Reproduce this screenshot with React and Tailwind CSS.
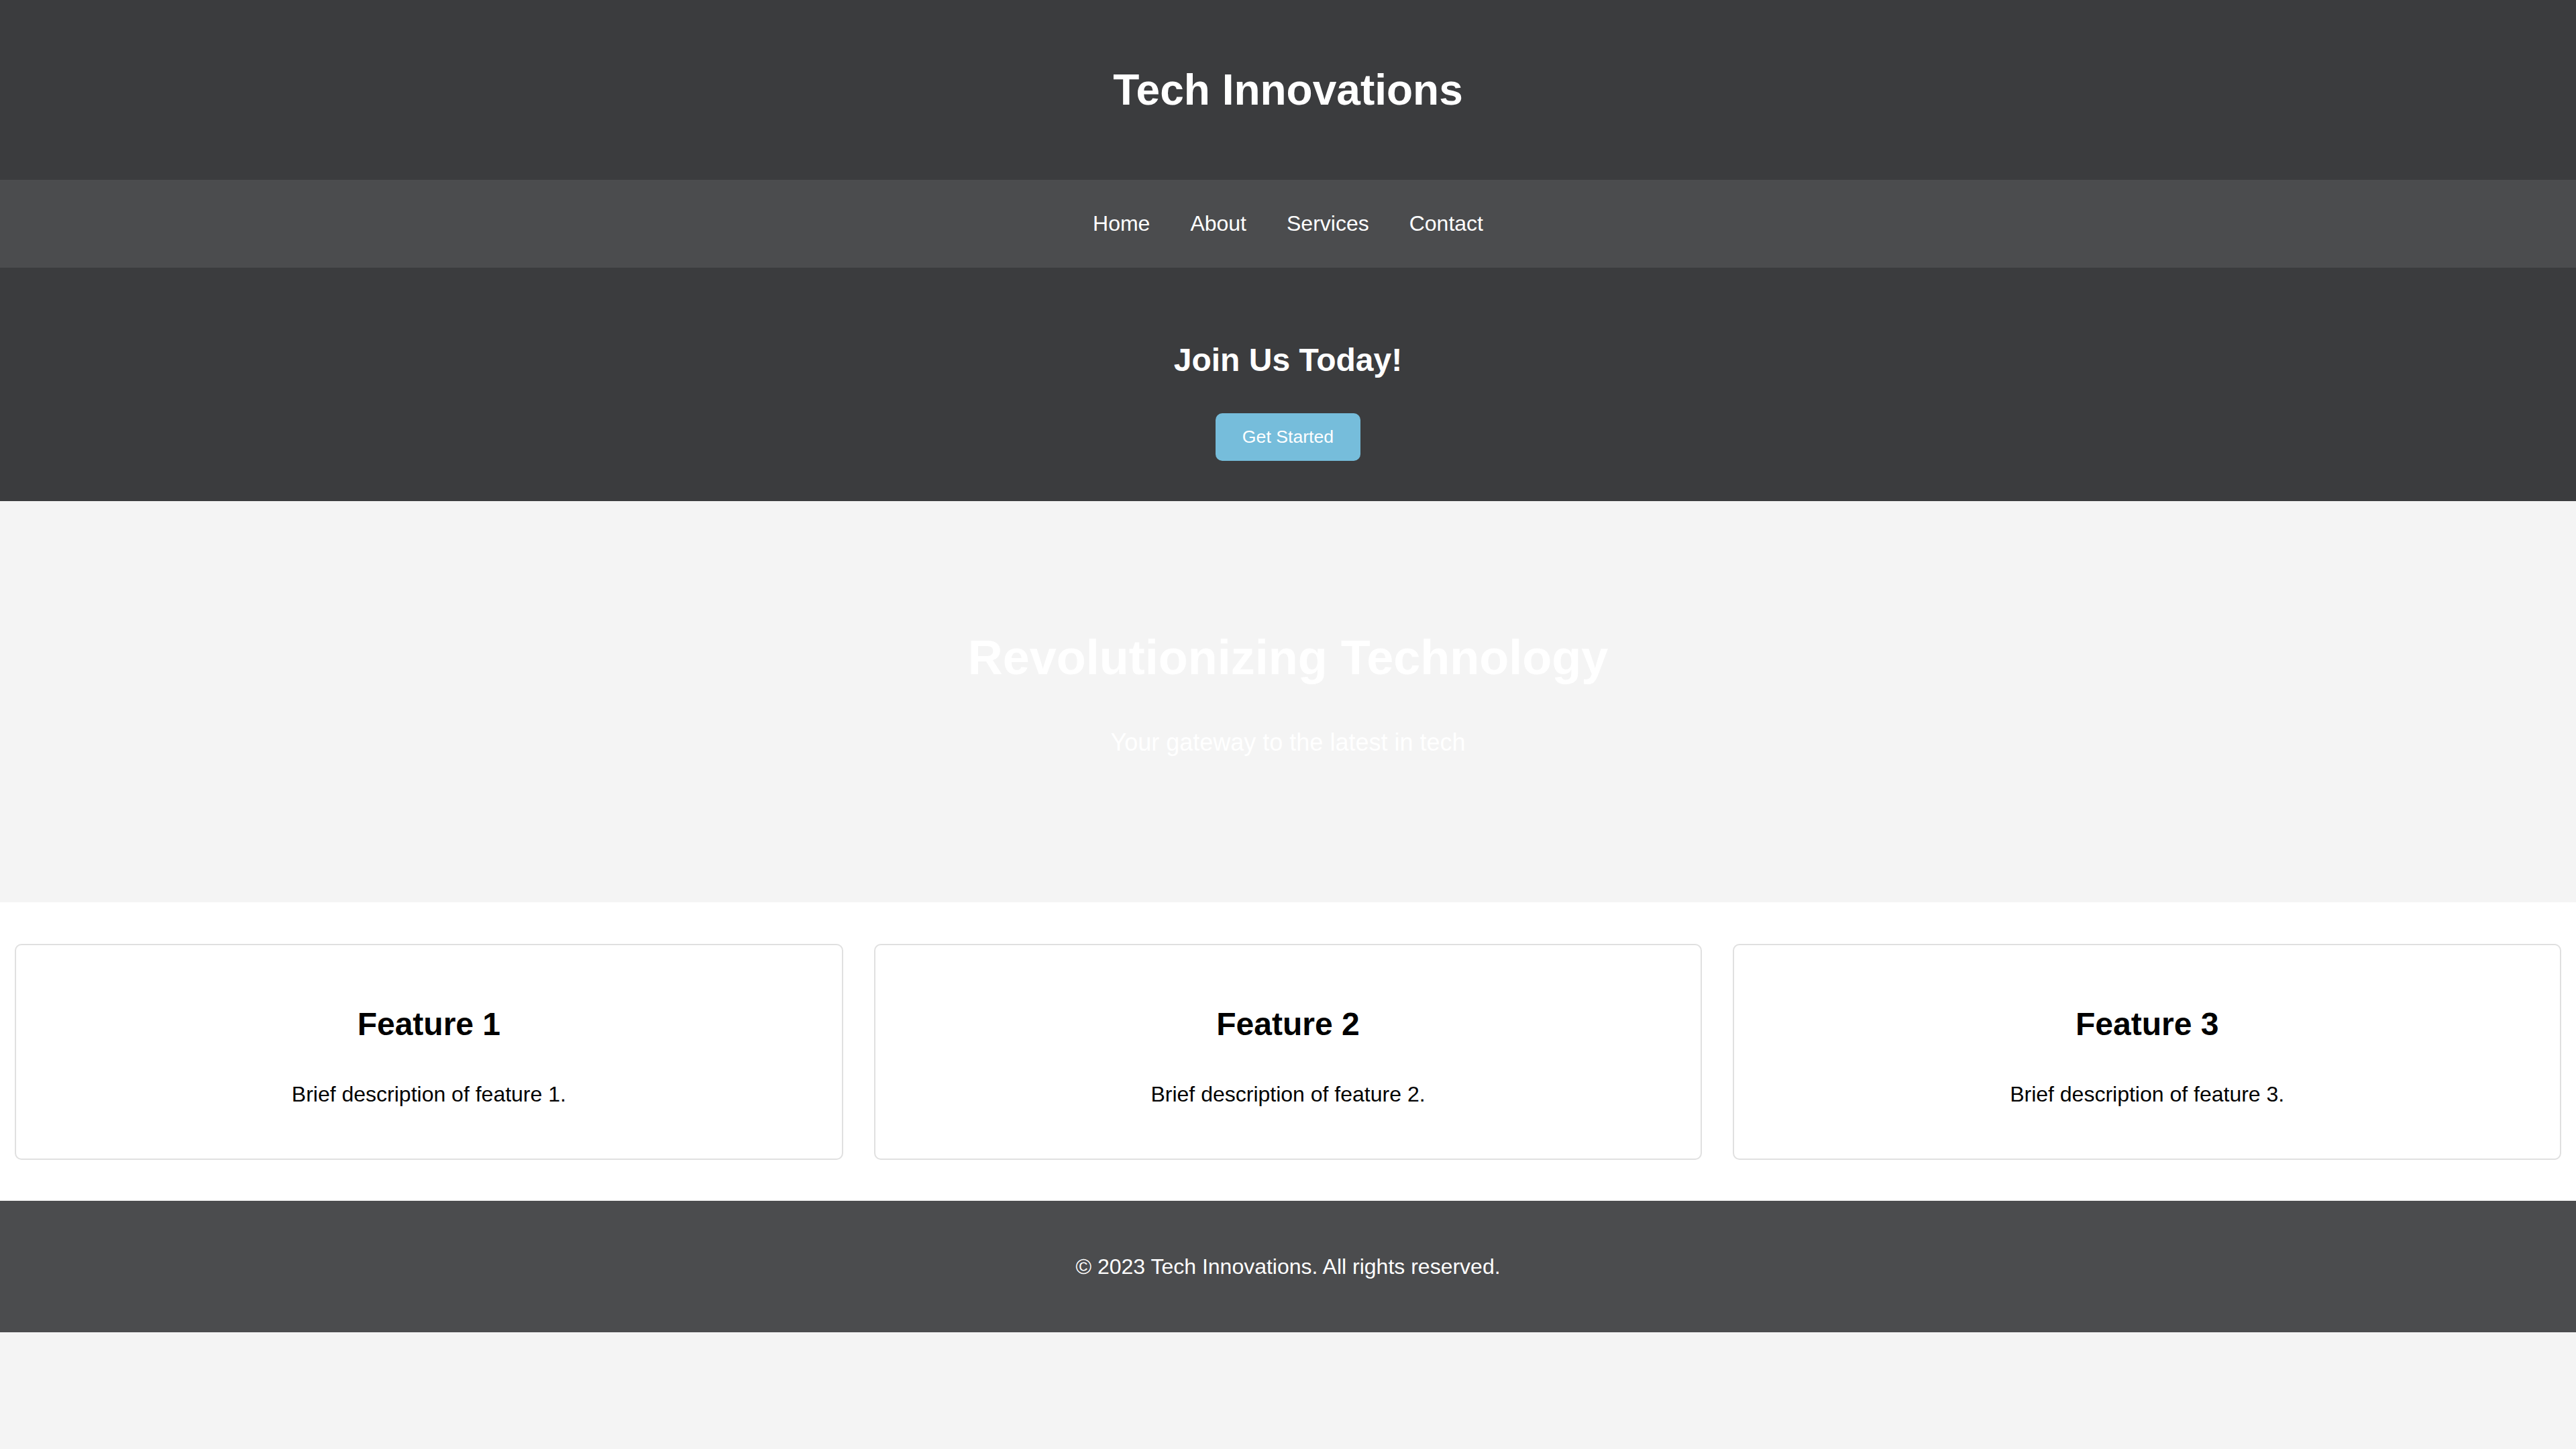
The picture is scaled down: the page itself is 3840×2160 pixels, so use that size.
import React from 'react'

const features = [
  { title: 'Feature 1', text: 'Brief description of feature 1.' },
  { title: 'Feature 2', text: 'Brief description of feature 2.' },
  { title: 'Feature 3', text: 'Brief description of feature 3.' },
]

const links = ['Home', 'About', 'Services', 'Contact']

function FeatureCard({ title, text }) {
  return (
    <div className="flex-1 h-[322px] bg-white border-2 border-[#e0e0e0] rounded-[10px] flex flex-col items-center pt-[90px]">
      <h3 className="text-[48px] leading-[55px] font-bold text-black">{title}</h3>
      <p className="mt-[59px] text-[32px] leading-[37px] text-black">{text}</p>
    </div>
  )
}

export default function App() {
  return (
    <div className="min-h-[2160px] bg-[#f4f4f4] font-['Liberation_Sans',Arial,sans-serif]">
      <header className="h-[268px] bg-[#3b3c3e] flex items-center justify-center">
        <h1 className="text-[64px] leading-[74px] font-bold text-white">Tech Innovations</h1>
      </header>

      <nav className="h-[131px] bg-[#4b4c4e] flex items-center justify-center">
        <ul className="flex gap-[60px]">
          {links.map((l) => (
            <li key={l}>
              <a href="#" className="text-[32px] leading-[37px] text-white">{l}</a>
            </li>
          ))}
        </ul>
      </nav>

      <section className="h-[348px] bg-[#3b3c3e] flex flex-col items-center pt-[110px]">
        <h2 className="text-[48px] leading-[55px] font-bold text-white">Join Us Today!</h2>
        <button className="mt-[52px] w-[216px] h-[71px] rounded-[10px] bg-[#76bddb] text-white text-[26.67px] leading-[31px]">
          Get Started
        </button>
      </section>

      <section className="h-[598px] bg-[#f4f4f4] flex flex-col items-center pt-[192px]">
        <h1 className="text-[72px] leading-[83px] font-bold text-white">Revolutionizing Technology</h1>
        <p className="mt-[64px] text-[36px] leading-[41px] text-white">Your gateway to the latest in tech</p>
      </section>

      <section className="h-[445px] bg-white flex gap-[46px] px-[22px] pt-[62px]">
        {features.map((f) => (
          <FeatureCard key={f.title} {...f} />
        ))}
      </section>

      <footer className="h-[196px] bg-[#4b4c4e] flex justify-center pt-[80px]">
        <p className="text-[32px] leading-[37px] text-white">© 2023 Tech Innovations. All rights reserved.</p>
      </footer>
    </div>
  )
}
